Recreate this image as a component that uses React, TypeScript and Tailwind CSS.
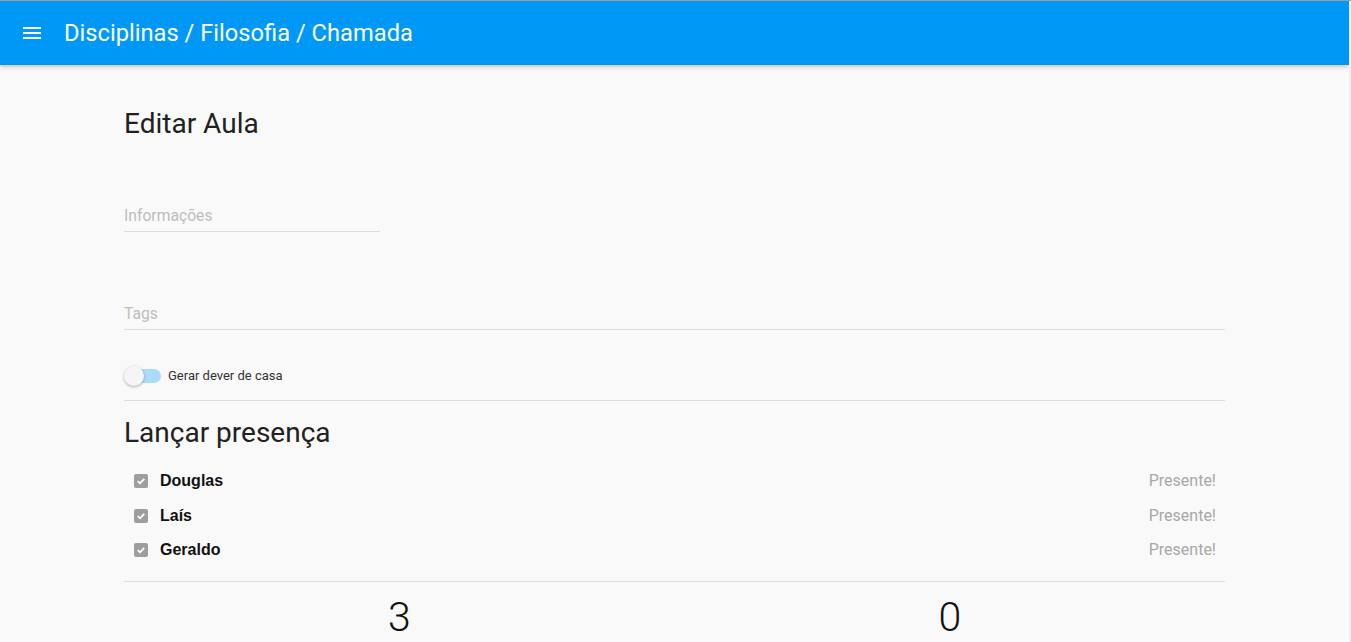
const students = ["Douglas", "Laís", "Geraldo"];

function MenuIcon() {
  return (
    <svg width="18" height="12" viewBox="0 0 18 12" className="shrink-0">
      <rect x="0" y="0" width="18" height="2" fill="white" />
      <rect x="0" y="5" width="18" height="2" fill="white" />
      <rect x="0" y="10" width="18" height="2" fill="white" />
    </svg>
  );
}

function CheckBox() {
  return (
    <div className="w-[14px] h-[14px] rounded-[2px] bg-[#9e9e9e] flex items-center justify-center">
      <svg width="10" height="10" viewBox="0 0 10 10">
        <path d="M1.8 5.2 L4 7.3 L8.3 2.8" stroke="white" strokeWidth="1.8" fill="none" />
      </svg>
    </div>
  );
}

export default function App() {
  return (
    <div className="min-h-[642px] flex bg-[#f9f9f9] border-t border-[#a0a0a0] font-['Roboto',sans-serif]">
      <div className="flex-1 flex flex-col">
        <header className="h-16 bg-[#0098f7] flex items-center px-[23px] shadow-[0_2px_4px_rgba(0,0,0,0.2)]">
          <MenuIcon />
          <h1 className="ml-[23px] mt-[2px] text-white text-[23.7px] leading-none">
            Disciplinas / Filosofia / Chamada
          </h1>
        </header>

        <main className="w-[1101px] mx-auto">
          <h2 className="mt-[43px] text-[28px] leading-[32px] text-[#212121]">Editar Aula</h2>

          <div className="mt-[67px] w-[256px] border-b border-[#dcdcdc] pb-[6px]">
            <div className="text-[15.7px] leading-[18px] text-[#bdbdbd]">Informações</div>
          </div>

          <div className="mt-[73px] border-b border-[#dcdcdc] pb-[6px]">
            <div className="text-[15.7px] leading-[18px] text-[#bdbdbd]">Tags</div>
          </div>

          <div className="mt-[36px] flex items-center h-[20px]">
            <div className="relative w-[37px] h-[20px]">
              <div className="absolute left-[3px] right-0 top-[3px] h-[14px] rounded-full bg-[#a9dbfb]" />
              <div className="absolute left-0 top-0 w-[20px] h-[20px] rounded-full bg-[#f5f5f5] shadow-[0_1px_3px_rgba(0,0,0,0.3)]" />
            </div>
            <span className="ml-[7px] text-[13px] text-[#333]">Gerar dever de casa</span>
          </div>

          <div className="mt-[14px] border-t border-[#dcdcdc]" />

          <h2 className="mt-[16px] text-[28px] leading-[32px] text-[#212121]">Lançar presença</h2>

          <div className="mt-[15px]">
            {students.map((s) => (
              <div key={s} className="flex items-center h-[34.5px] pl-[10px] pr-[9px]">
                <CheckBox />
                <span className="ml-[12px] font-['Liberation_Sans',sans-serif] font-bold text-[16px] text-[#111]">
                  {s}
                </span>
                <span className="ml-auto text-[16px] text-[#a8a8a8]">Presente!</span>
              </div>
            ))}
          </div>

          <div className="mt-[13px] border-t border-[#dcdcdc]" />

          <div className="grid grid-cols-2 text-center mt-[12px]">
            <div className="text-[41px] leading-[46px] text-[#111] font-light">3</div>
            <div className="text-[41px] leading-[46px] text-[#111] font-light">0</div>
          </div>
        </main>
      </div>
      <div className="w-[2px] bg-[#eef1f3]" />
    </div>
  );
}
